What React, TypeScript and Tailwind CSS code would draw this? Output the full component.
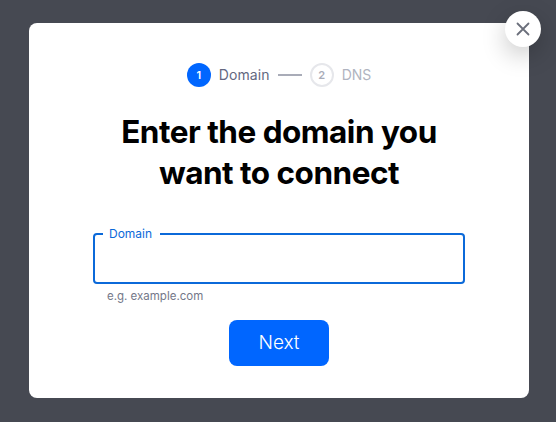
export default function App() {
  return (
    <div className="h-[422px] w-[556px] overflow-hidden bg-[#464952] p-[23px_27px_24px_29px] font-['Inter','Liberation_Sans',sans-serif]">
      <div className="relative flex h-[375px] w-[500px] flex-col items-center rounded-lg bg-white pt-[40px]">
        <button className="absolute right-[-12px] top-[-12px] flex h-9 w-9 items-center justify-center rounded-full bg-white text-[#6b6f7b] shadow-[0_8px_24px_rgba(0,0,0,0.22)]">
          <svg width="14" height="14" viewBox="0 0 14 14" fill="none" stroke="currentColor" strokeWidth="1.8" strokeLinecap="round">
            <path d="M1.5 1.5 12.5 12.5M12.5 1.5 1.5 12.5" />
          </svg>
        </button>

        <div className="flex h-6 items-center">
          <span className="flex h-6 w-6 items-center justify-center rounded-full bg-[#0066ff] text-[11px] font-semibold text-white">1</span>
          <span className="ml-[8px] text-sm leading-6 tracking-[0.1px] text-[#636880]">Domain</span>
          <span className="ml-[8px] h-0.5 w-6 bg-[#a9acb8]" />
          <span className="ml-2 flex h-6 w-6 items-center justify-center rounded-full border-2 border-[#e6e7eb] text-[11px] font-semibold text-[#a9acb8]">2</span>
          <span className="ml-2 text-sm leading-6 text-[#b0b4c0]">DNS</span>
        </div>

        <h1 className="mt-[24px] w-[360px] text-center text-[31.5px] font-bold leading-[41px] tracking-[-0.5px] text-black">
          Enter the domain you want to connect
        </h1>

        <fieldset className="mt-[34px] h-[57px] w-[372px] rounded-[4px] border-2 border-[#0b69d9] px-[8px]">
          <legend className="pl-[6px] pr-[8px] text-xs leading-[14px] text-[#0b69d9]">Domain</legend>
          <input className="h-full w-full bg-transparent outline-none" aria-label="Domain" />
        </fieldset>
        <p className="mt-[4px] w-[372px] pl-[14px] text-[11.5px] leading-4 text-[#747889]">e.g. example.com</p>

        <button className="mt-[16px] h-[46px] w-[100px] rounded-lg bg-[#0066ff] pt-px text-[19px] font-light text-white">Next</button>
      </div>
    </div>
  );
}
